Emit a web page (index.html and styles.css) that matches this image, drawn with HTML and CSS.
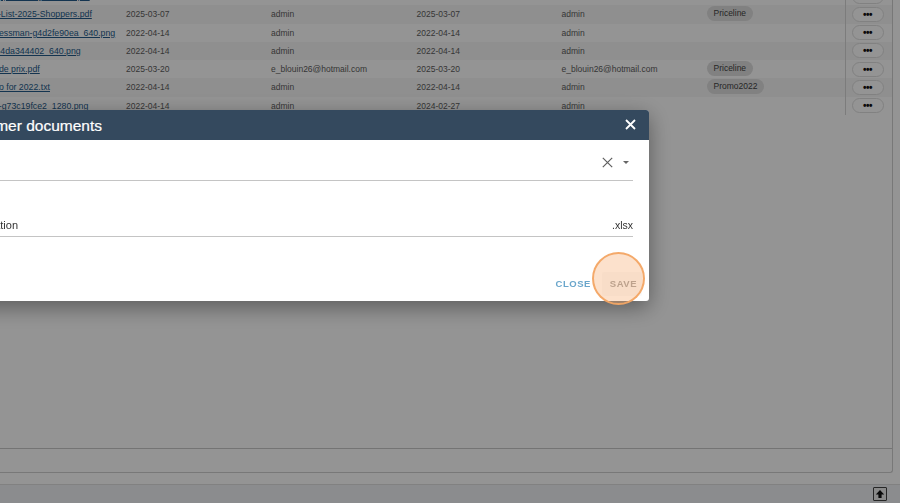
FILE: index.html
```html
<!DOCTYPE html>
<html lang="en">
<head>
<meta charset="utf-8">
<title>Customer documents</title>
<link rel="stylesheet" href="styles.css">
</head>
<body>
<div class="page">
  <main class="content">
    <div class="panel">
      <div class="rows">
        <div class="row"><a class="name" href="#">Catalogue-2025-Shoppers-Drug-Mart-v2.pdf</a><span class="d1">2025-03-07</span><span class="u1">admin</span><span class="d2">2025-03-07</span><span class="u2">admin</span><span class="tags"></span><span class="act"><button class="more">•••</button></span></div>
        <div class="row"><a class="name" href="#">Price-List-2025-Shoppers.pdf</a><span class="d1">2025-03-07</span><span class="u1">admin</span><span class="d2">2025-03-07</span><span class="u2">admin</span><span class="tags"><span class="tag">Priceline</span></span><span class="act"><button class="more">•••</button></span></div>
        <div class="row"><a class="name" href="#">businessman-g4d2fe90ea_640.png</a><span class="d1">2022-04-14</span><span class="u1">admin</span><span class="d2">2022-04-14</span><span class="u2">admin</span><span class="tags"></span><span class="act"><button class="more">•••</button></span></div>
        <div class="row"><a class="name" href="#">team-4da344402_640.png</a><span class="d1">2022-04-14</span><span class="u1">admin</span><span class="d2">2022-04-14</span><span class="u2">admin</span><span class="tags"></span><span class="act"><button class="more">•••</button></span></div>
        <div class="row"><a class="name" href="#">Liste de prix.pdf</a><span class="d1">2025-03-20</span><span class="u1">e_blouin26@hotmail.com</span><span class="d2">2025-03-20</span><span class="u2">e_blouin26@hotmail.com</span><span class="tags"><span class="tag">Priceline</span></span><span class="act"><button class="more">•••</button></span></div>
        <div class="row"><a class="name" href="#">Promo for 2022.txt</a><span class="d1">2022-04-14</span><span class="u1">admin</span><span class="d2">2022-04-14</span><span class="u2">admin</span><span class="tags"><span class="tag">Promo2022</span></span><span class="act"><button class="more">•••</button></span></div>
        <div class="row"><a class="name" href="#">office-g73c19fce2_1280.png</a><span class="d1">2022-04-14</span><span class="u1">admin</span><span class="d2">2024-02-27</span><span class="u2">admin</span><span class="tags"></span><span class="act"><button class="more">•••</button></span></div>
      </div>
      <div class="spacer"></div>
      <div class="panel-foot"></div>
    </div>
  </main>
  <footer class="bar">
    <button class="top" aria-label="Back to top">
      <svg width="10" height="10" viewBox="0 0 10 10"><path d="M5 1 9.2 5.4H6.6V9H3.4V5.4H.8Z" fill="#111"/></svg>
    </button>
  </footer>
</div>

<div class="scrim"></div>

<section class="modal">
  <header class="modal-head">
    <h2>Add customer documents</h2>
    <svg class="head-x" width="11" height="11" viewBox="0 0 11 11"><path d="M1 1 10 10M10 1 1 10" stroke="#fff" stroke-width="1.8"/></svg>
  </header>
  <div class="modal-body">
    <div class="field field-select">
      <span class="value"></span>
      <svg class="clear" width="11" height="11" viewBox="0 0 11 11"><path d="M.8.8 10.2 10.2M10.2.8.8 10.2" stroke="#5f5f5f" stroke-width="1.2"/></svg>
      <span class="caret"></span>
    </div>
    <div class="field field-text">
      <span class="value">Price list information</span>
      <span class="suffix">.xlsx</span>
    </div>
  </div>
  <div class="modal-actions">
    <button class="btn">Close</button>
    <button class="btn save">Save</button>
  </div>
</section>

<div class="spot"></div>
</body>
</html>
```
FILE: styles.css
```css
* { box-sizing: border-box; }
html, body { margin: 0; height: 100%; overflow: hidden; }
body { font-family: "Liberation Sans", Arial, sans-serif; background: #fff; color: #333; }

.page { height: 503px; display: flex; flex-direction: column; overflow: hidden; }
.content { flex: 1; padding: 0 7px 11px 0; min-height: 0; }
.panel {
  height: 100%;
  border-right: 1px solid #cfcfcf;
  border-bottom: 1px solid #cfcfcf;
  border-bottom-right-radius: 3px;
  display: flex;
  flex-direction: column;
}
.rows { margin-top: -13px; margin-left: -22px; }
.row {
  height: 18.25px;
  display: grid;
  grid-template-columns: 148px 145px 145.5px 145px 146px 137px 49px;
  align-items: center;
  font-size: 8.5px;
  color: #5d5d5d;
}
.row:nth-child(even) { background: #f7f7f7; }
.name { font-size: 8.75px; color: #235a8a; text-decoration: underline; white-space: nowrap; overflow: hidden; }
.row:first-child .name { margin-left: -60px; overflow: visible; }
.tags { margin-top: -2px; margin-left: -1px; }
.tag {
  display: inline-block;
  height: 15px;
  line-height: 15px;
  padding: 0 7px;
  border-radius: 8px;
  background: #dedede;
  color: #444;
  font-size: 8.5px;
}
.act { height: 100%; border-left: 1px solid #d6d6d6; padding-left: 6px; display: flex; align-items: center; }
.more {
  width: 32px;
  height: 15px;
  padding: 0;
  border: 1px solid #dedede;
  border-radius: 8px;
  background: #fff;
  color: #111;
  font: 700 10px/13px "Liberation Sans", Arial, sans-serif;
  letter-spacing: -0.5px;
}
.spacer { flex: 1; border-bottom: 1px solid #c8c8c8; }
.panel-foot { height: 23px; }

.bar {
  height: 19px;
  flex: none;
  background: #f0f1f4;
  border-top: 1px solid #dedede;
  display: flex;
  justify-content: flex-end;
  align-items: center;
  padding-right: 13px;
}
.top {
  width: 14px;
  height: 14px;
  padding: 0;
  border: 1px solid #444;
  border-radius: 1px;
  background: #ededed;
  display: flex;
  align-items: center;
  justify-content: center;
}

.scrim { position: fixed; inset: 0; background: rgba(0, 0, 0, 0.42); }

.modal {
  position: fixed;
  left: -150px;
  top: 110px;
  width: 799px;
  height: 191px;
  background: #fff;
  border-radius: 3px;
  display: flex;
  flex-direction: column;
  box-shadow: 0 6px 22px rgba(0, 0, 0, 0.4);
}
.modal-head {
  height: 29.5px;
  flex: none;
  background: #34495e;
  border-radius: 3px 3px 0 0;
  display: flex;
  align-items: center;
  justify-content: space-between;
  padding: 0 13px 0 0;
}
.modal-head h2 {
  margin: 0;
  padding-top: 1px;
  font: 400 15.5px/29px "Liberation Sans", sans-serif;
  -webkit-text-stroke: 0.2px #fff;
  color: #fff;
  text-align: right;
  width: 252px;
}
.modal-body { flex: 1; padding: 0 16px 0 0; display: flex; flex-direction: column; }
.field { display: flex; align-items: center; border-bottom: 1.5px solid #c4c4c4; font: 400 11px/14px "Liberation Sans", sans-serif; color: #333; }
.field-select { height: 41px; padding-top: 6px; }
.field-text { height: 32px; margin-top: 24.5px; padding-top: 9px; }
.value { flex: 1; text-align: left; padding-left: 69px; white-space: nowrap; }
.suffix { font-size: 10.5px; }
.clear { margin-right: 10px; }
.caret {
  width: 0;
  height: 0;
  margin-right: 4px;
  border-left: 3.5px solid transparent;
  border-right: 3.5px solid transparent;
  border-top: 3.5px solid #666;
}
.modal-actions { height: 35px; flex: none; display: flex; justify-content: flex-end; align-items: flex-start; padding: 6px 7px 0 0; }
.btn {
  height: 24px;
  padding: 0 5px;
  border: 0;
  background: transparent;
  font: 700 9.5px/24px "Liberation Sans", sans-serif;
  letter-spacing: 0.5px;
  text-transform: uppercase;
  color: #6aa6cb;
  border-radius: 2px;
}
.save { color: #9e9e9e; background: #f9f9f9; padding: 0 5px 0 8px; margin-left: 6px; }

.spot {
  position: fixed;
  left: 592px;
  top: 252px;
  width: 53px;
  height: 53px;
  border-radius: 50%;
  border: 2.5px solid rgba(243, 165, 100, 0.95);
  background: rgba(245, 170, 110, 0.35);
}
```
